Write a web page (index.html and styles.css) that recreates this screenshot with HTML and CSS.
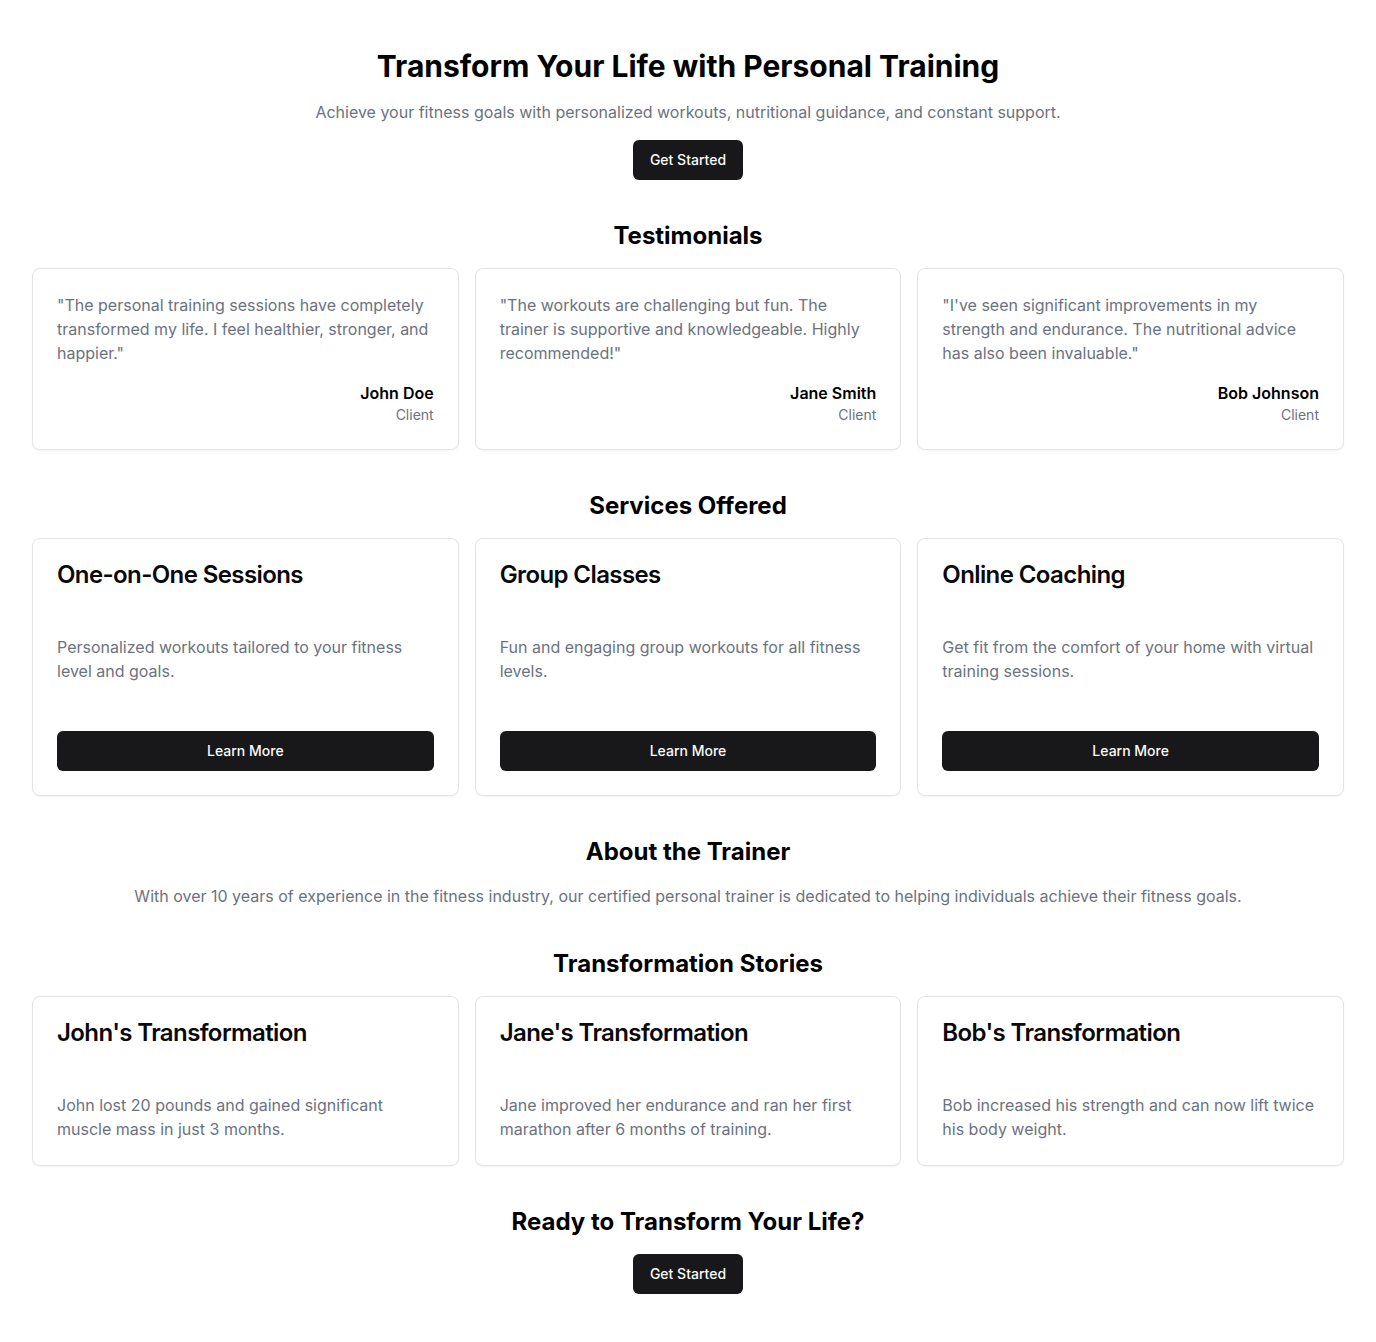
FILE: index.html
```html
<!DOCTYPE html>
<html lang="en">
<head>
<meta charset="utf-8">
<title>Personal Training</title>
<link rel="stylesheet" href="styles.css">
</head>
<body>
<main class="page">
  <section class="hero">
    <h1 class="hero-title">Transform Your Life with Personal Training</h1>
    <p class="muted">Achieve your fitness goals with personalized workouts, nutritional guidance, and constant support.</p>
    <button class="btn">Get Started</button>
  </section>

  <section class="section">
    <h2 class="section-title">Testimonials</h2>
    <div class="grid">
      <div class="card card-pad">
        <p class="quote">"The personal training sessions have completely transformed my life. I feel healthier, stronger, and happier."</p>
        <div class="author">
          <div class="author-name">John Doe</div>
          <div class="author-role">Client</div>
        </div>
      </div>
      <div class="card card-pad">
        <p class="quote">"The workouts are challenging but fun. The trainer is supportive and knowledgeable. Highly recommended!"</p>
        <div class="author">
          <div class="author-name">Jane Smith</div>
          <div class="author-role">Client</div>
        </div>
      </div>
      <div class="card card-pad">
        <p class="quote">"I've seen significant improvements in my strength and endurance. The nutritional advice has also been invaluable."</p>
        <div class="author">
          <div class="author-name">Bob Johnson</div>
          <div class="author-role">Client</div>
        </div>
      </div>
    </div>
  </section>

  <section class="section">
    <h2 class="section-title">Services Offered</h2>
    <div class="grid">
      <div class="card">
        <div class="card-header"><h3 class="card-title">One-on-One Sessions</h3></div>
        <div class="card-content"><p class="muted">Personalized workouts tailored to your fitness level and goals.</p></div>
        <div class="card-footer"><button class="btn btn-full">Learn More</button></div>
      </div>
      <div class="card">
        <div class="card-header"><h3 class="card-title">Group Classes</h3></div>
        <div class="card-content"><p class="muted">Fun and engaging group workouts for all fitness levels.</p></div>
        <div class="card-footer"><button class="btn btn-full">Learn More</button></div>
      </div>
      <div class="card">
        <div class="card-header"><h3 class="card-title">Online Coaching</h3></div>
        <div class="card-content"><p class="muted">Get fit from the comfort of your home with virtual training sessions.</p></div>
        <div class="card-footer"><button class="btn btn-full">Learn More</button></div>
      </div>
    </div>
  </section>

  <section class="section">
    <h2 class="section-title">About the Trainer</h2>
    <p class="muted center">With over 10 years of experience in the fitness industry, our certified personal trainer is dedicated to helping individuals achieve their fitness goals.</p>
  </section>

  <section class="section">
    <h2 class="section-title">Transformation Stories</h2>
    <div class="grid">
      <div class="card">
        <div class="card-header"><h3 class="card-title">John's Transformation</h3></div>
        <div class="card-content"><p class="muted">John lost 20 pounds and gained significant muscle mass in just 3 months.</p></div>
      </div>
      <div class="card">
        <div class="card-header"><h3 class="card-title">Jane's Transformation</h3></div>
        <div class="card-content"><p class="muted">Jane improved her endurance and ran her first marathon after 6 months of training.</p></div>
      </div>
      <div class="card">
        <div class="card-header"><h3 class="card-title">Bob's Transformation</h3></div>
        <div class="card-content"><p class="muted">Bob increased his strength and can now lift twice his body weight.</p></div>
      </div>
    </div>
  </section>

  <section class="section cta">
    <h2 class="section-title">Ready to Transform Your Life?</h2>
    <button class="btn">Get Started</button>
  </section>
</main>
</body>
</html>
```

FILE: styles.css
```css
* {
  box-sizing: border-box;
}

html, body {
  margin: 0;
  padding: 0;
  background: #ffffff;
}

body {
  font-family: Inter, "Noto Sans", "Liberation Sans", sans-serif;
  color: #09090b;
  -webkit-font-smoothing: antialiased;
}

.page {
  padding: 48px 32px 48px;
  display: flex;
  flex-direction: column;
  gap: 40px;
}

h1, h2, h3, p {
  margin: 0;
}

.hero {
  display: flex;
  flex-direction: column;
  align-items: center;
  gap: 16px;
  text-align: center;
}

.hero-title {
  font-size: 30px;
  line-height: 36px;
  font-weight: 700;
  color: #000;
}

.muted {
  font-size: 16px;
  line-height: 24px;
  color: #6b7280;
}

.center {
  text-align: center;
}

.btn {
  font-family: inherit;
  font-size: 14px;
  font-weight: 500;
  line-height: 20px;
  height: 40px;
  padding: 0 17px;
  border: none;
  border-radius: 6px;
  background: #18181b;
  color: #fafafa;
  cursor: pointer;
}

.btn-full {
  width: 100%;
}

.section {
  display: flex;
  flex-direction: column;
  gap: 16px;
}

.cta {
  align-items: center;
}

.section-title {
  font-size: 24px;
  line-height: 32px;
  font-weight: 700;
  text-align: center;
  color: #000;
}

.grid {
  display: grid;
  grid-template-columns: repeat(3, 1fr);
  gap: 16px;
}

.card {
  border: 1px solid #e4e4e7;
  border-radius: 8px;
  background: #fff;
  box-shadow: 0 1px 2px rgba(0, 0, 0, 0.05);
  display: flex;
  flex-direction: column;
}

.card-pad {
  padding: 24px;
}

.quote {
  font-size: 16px;
  line-height: 24px;
  color: #6b7280;
}

.author {
  margin-top: 16px;
  text-align: right;
}

.author-name {
  font-size: 16px;
  line-height: 24px;
  font-weight: 600;
  color: #000;
}

.author-role {
  font-size: 14px;
  line-height: 20px;
  color: #6b7280;
}

.card-header {
  padding: 24px;
}

.card-title {
  font-size: 24px;
  line-height: 24px;
  font-weight: 600;
  letter-spacing: -0.025em;
  color: #09090b;
}

.card-content {
  padding: 24px;
  flex: 1;
}

.card-footer {
  padding: 24px;
}
```
